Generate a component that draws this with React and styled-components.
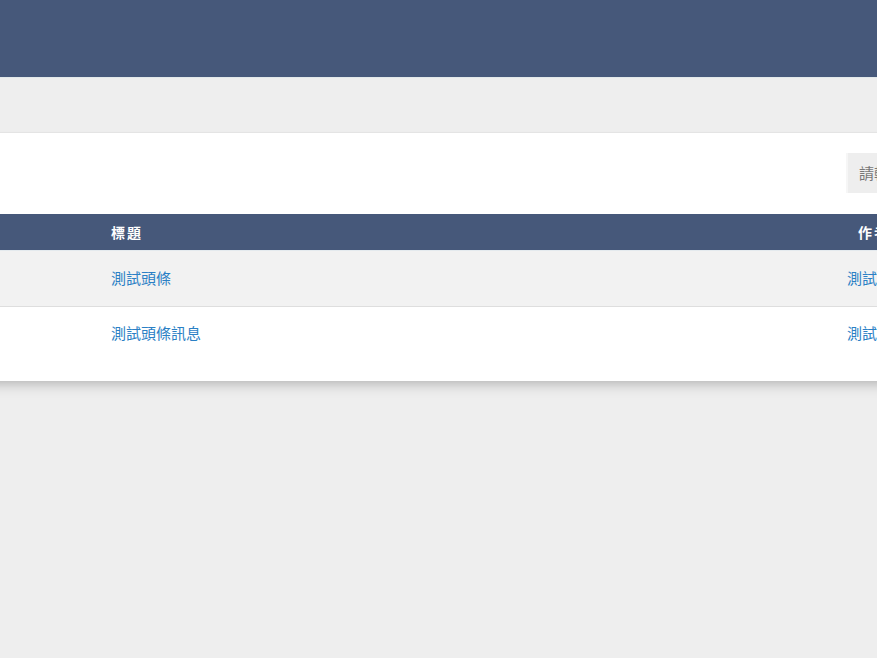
import React from "react";
import styled, { createGlobalStyle } from "styled-components";

const GlobalStyle = createGlobalStyle`
  html {
    overflow: hidden;
  }
  body {
    margin: 0;
    padding: 0;
    min-height: 100vh;
    background: #eeeeee;
    font-family: "Liberation Sans", "Noto Sans CJK TC", sans-serif;
    font-size: 14px;
  }
`;

const TopBar = styled.header`
  height: 77px;
  background: #46587a;
  border-bottom: 1px solid #e2e8ea;
`;

const Main = styled.main`
  padding: 54px 0 60px;
`;

const Card = styled.section`
  width: 1120px;
  margin-left: -20px;
  background: #ffffff;
  border-top: 1px solid #e4e4e4;
  padding: 20px 20px 21px;
  box-sizing: border-box;
  box-shadow: 0 8px 12px -5px rgba(0, 0, 0, 0.25);
`;

const Toolbar = styled.div`
  display: flex;
  justify-content: flex-end;
  margin-bottom: 21px;
`;

const Search = styled.input`
  width: 234px;
  height: 40px;
  box-sizing: border-box;
  border: none;
  border-left: 2px solid #f6f6f6;
  background: #eeeeee;
  padding: 0 11px;
  font-family: "Liberation Sans", "Noto Sans CJK TC", sans-serif;
  font-size: 15px;
  color: #555;
  outline: none;
  &::placeholder {
    color: #777;
  }
`;

const Table = styled.table`
  width: 100%;
  border-collapse: collapse;
  table-layout: fixed;
`;

const HeadRow = styled.tr`
  background: #46587a;
  height: 36px;
`;

const Th = styled.th`
  width: ${(p) => p.$width || "auto"};
  padding: 0 0 0 ${(p) => p.$pad || 0}px;
  text-align: left;
  color: #ffffff;
  font-weight: 700;
  font-size: 14px;
  letter-spacing: 2px;
  border-bottom: 1px solid #e4eaee;
`;

const Row = styled.tr`
  background: ${(p) => (p.$striped ? "#f2f2f2" : "#ffffff")};
  height: ${(p) => p.$height}px;
  border-bottom: ${(p) => (p.$last ? "none" : "1px solid #dedede")};
`;

const Td = styled.td`
  padding: 0 0 2px ${(p) => p.$pad || 0}px;
  vertical-align: middle;
`;

const Link = styled.a`
  color: #2b80c5;
  text-decoration: none;
  font-size: 15px;
  cursor: pointer;
`;

const rows = [
  { id: 1, title: "測試頭條", author: "測試員" },
  { id: 2, title: "測試頭條訊息", author: "測試員" },
];

export default function App() {
  return (
    <>
      <GlobalStyle />
      <TopBar />
      <Main>
        <Card>
          <Toolbar>
            <Search placeholder="請輸入關鍵字" />
          </Toolbar>
          <Table>
            <thead>
              <HeadRow>
                <Th $width="111px"></Th>
                <Th $width="736px">標題</Th>
                <Th $pad={11}>作者</Th>
              </HeadRow>
            </thead>
            <tbody>
              {rows.map((r, i) => (
                <Row
                  key={r.id}
                  $striped={i % 2 === 0}
                  $last={i === rows.length - 1}
                  $height={i === 0 ? 56 : 54}
                >
                  <Td></Td>
                  <Td>
                    <Link>{r.title}</Link>
                  </Td>
                  <Td>
                    <Link>{r.author}</Link>
                  </Td>
                </Row>
              ))}
            </tbody>
          </Table>
        </Card>
      </Main>
    </>
  );
}
